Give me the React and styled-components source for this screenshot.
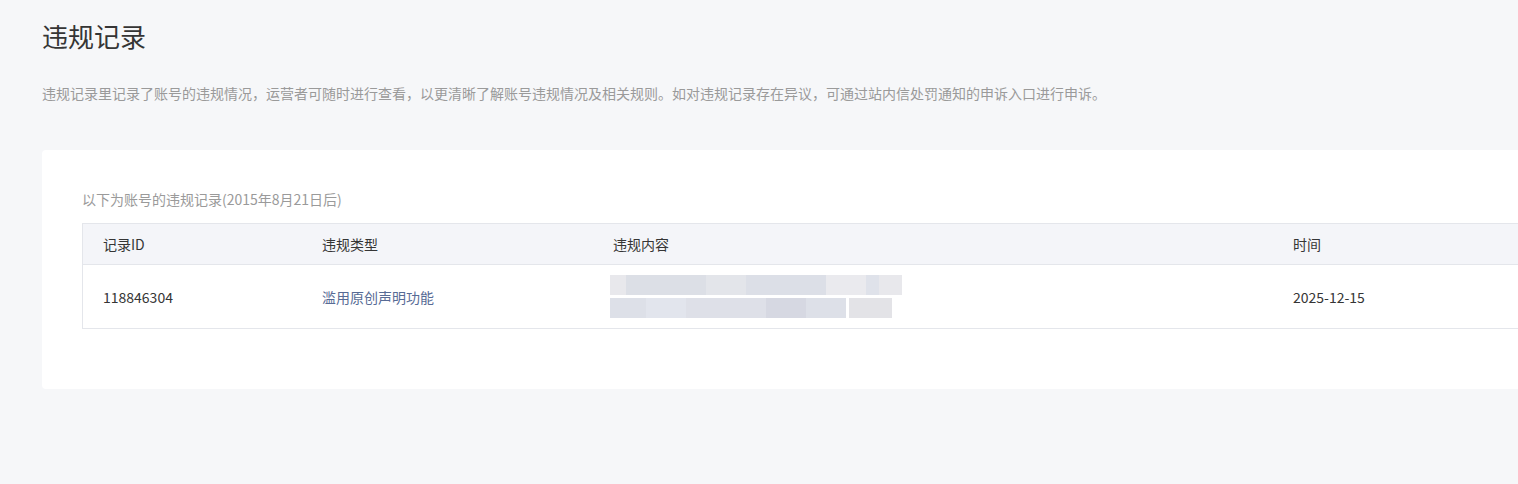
import React from "react";
import styled, { createGlobalStyle } from "styled-components";

const Global = createGlobalStyle`
  html, body { margin: 0; padding: 0; }
  body {
    background: #f6f7f9;
    font-family: "Noto Sans CJK SC", "Noto Sans", sans-serif;
    overflow: hidden;
    width: 1518px;
    height: 484px;
  }
`;

const Page = styled.div`
  padding: 0 0 0 42px;
  width: 1600px;
`;

const Title = styled.h2`
  margin: 0;
  padding-top: 18px;
  font-size: 26px;
  line-height: 36px;
  font-weight: 400;
  color: #353535;
`;

const Desc = styled.p`
  margin: 29px 0 0;
  font-size: 14px;
  line-height: 20px;
  color: #9a9a9a;
`;

const Card = styled.section`
  margin-top: 47px;
  width: 1540px;
  background: #fff;
  border-radius: 4px;
  padding: 39px 40px 60px;
  box-sizing: border-box;
`;

const SubTitle = styled.div`
  font-size: 14px;
  line-height: 20px;
  color: #9a9a9a;
  margin-bottom: 14px;
`;

const Table = styled.div`
  border: 1px solid #e4e6eb;
  display: grid;
  grid-template-columns: 219px 291px 680px 1fr;
`;

const HeadCell = styled.div`
  background: #f4f5f9;
  height: 40px;
  display: flex;
  align-items: center;
  padding-left: 20px;
  font-size: 14px;
  color: #353535;
  border-bottom: 1px solid #e4e6eb;
`;

const Cell = styled.div`
  height: 63px;
  display: flex;
  align-items: center;
  padding-left: 20px;
  font-size: 14px;
  color: ${(p) => (p.$link ? "#576b95" : "#353535")};
`;

const Blur = styled.div`
  display: flex;
  flex-direction: column;
  gap: 3px;
  margin-left: -3px;
`;

const BlurLine = styled.div`
  display: flex;
  height: 20px;
`;

const Seg = styled.span`
  display: block;
  width: ${(p) => p.$w}px;
  margin-left: ${(p) => p.$gap || 0}px;
  background: ${(p) => p.$c};
`;

const line1 = [
  [16, "#e8e8ec"],
  [80, "#dcdfe6"],
  [40, "#e3e5ea"],
  [80, "#dcdfe7"],
  [40, "#eaeaee"],
  [13, "#dfe2ea"],
  [23, "#e8e8ec"],
];
const line2 = [
  [36, "#dde0e8"],
  [40, "#e2e5ed"],
  [80, "#dee0e8"],
  [40, "#d6d8e2"],
  [40, "#dde0e8"],
  [43, "#e3e3e7", 3],
];

export default function App() {
  return (
    <>
      <Global />
      <Page>
        <Title>违规记录</Title>
        <Desc>
          违规记录里记录了账号的违规情况，运营者可随时进行查看，以更清晰了解账号违规情况及相关规则。如对违规记录存在异议，可通过站内信处罚通知的申诉入口进行申诉。
        </Desc>
        <Card>
          <SubTitle>以下为账号的违规记录(2015年8月21日后)</SubTitle>
          <Table>
            <HeadCell>记录ID</HeadCell>
            <HeadCell>违规类型</HeadCell>
            <HeadCell>违规内容</HeadCell>
            <HeadCell>时间</HeadCell>
            <Cell>118846304</Cell>
            <Cell $link>滥用原创声明功能</Cell>
            <Cell>
              <Blur>
                <BlurLine>
                  {line1.map(([w, c], i) => (
                    <Seg key={i} $w={w} $c={c} />
                  ))}
                </BlurLine>
                <BlurLine>
                  {line2.map(([w, c, g], i) => (
                    <Seg key={i} $w={w} $c={c} $gap={g} />
                  ))}
                </BlurLine>
              </Blur>
            </Cell>
            <Cell>2025-12-15</Cell>
          </Table>
        </Card>
      </Page>
    </>
  );
}
